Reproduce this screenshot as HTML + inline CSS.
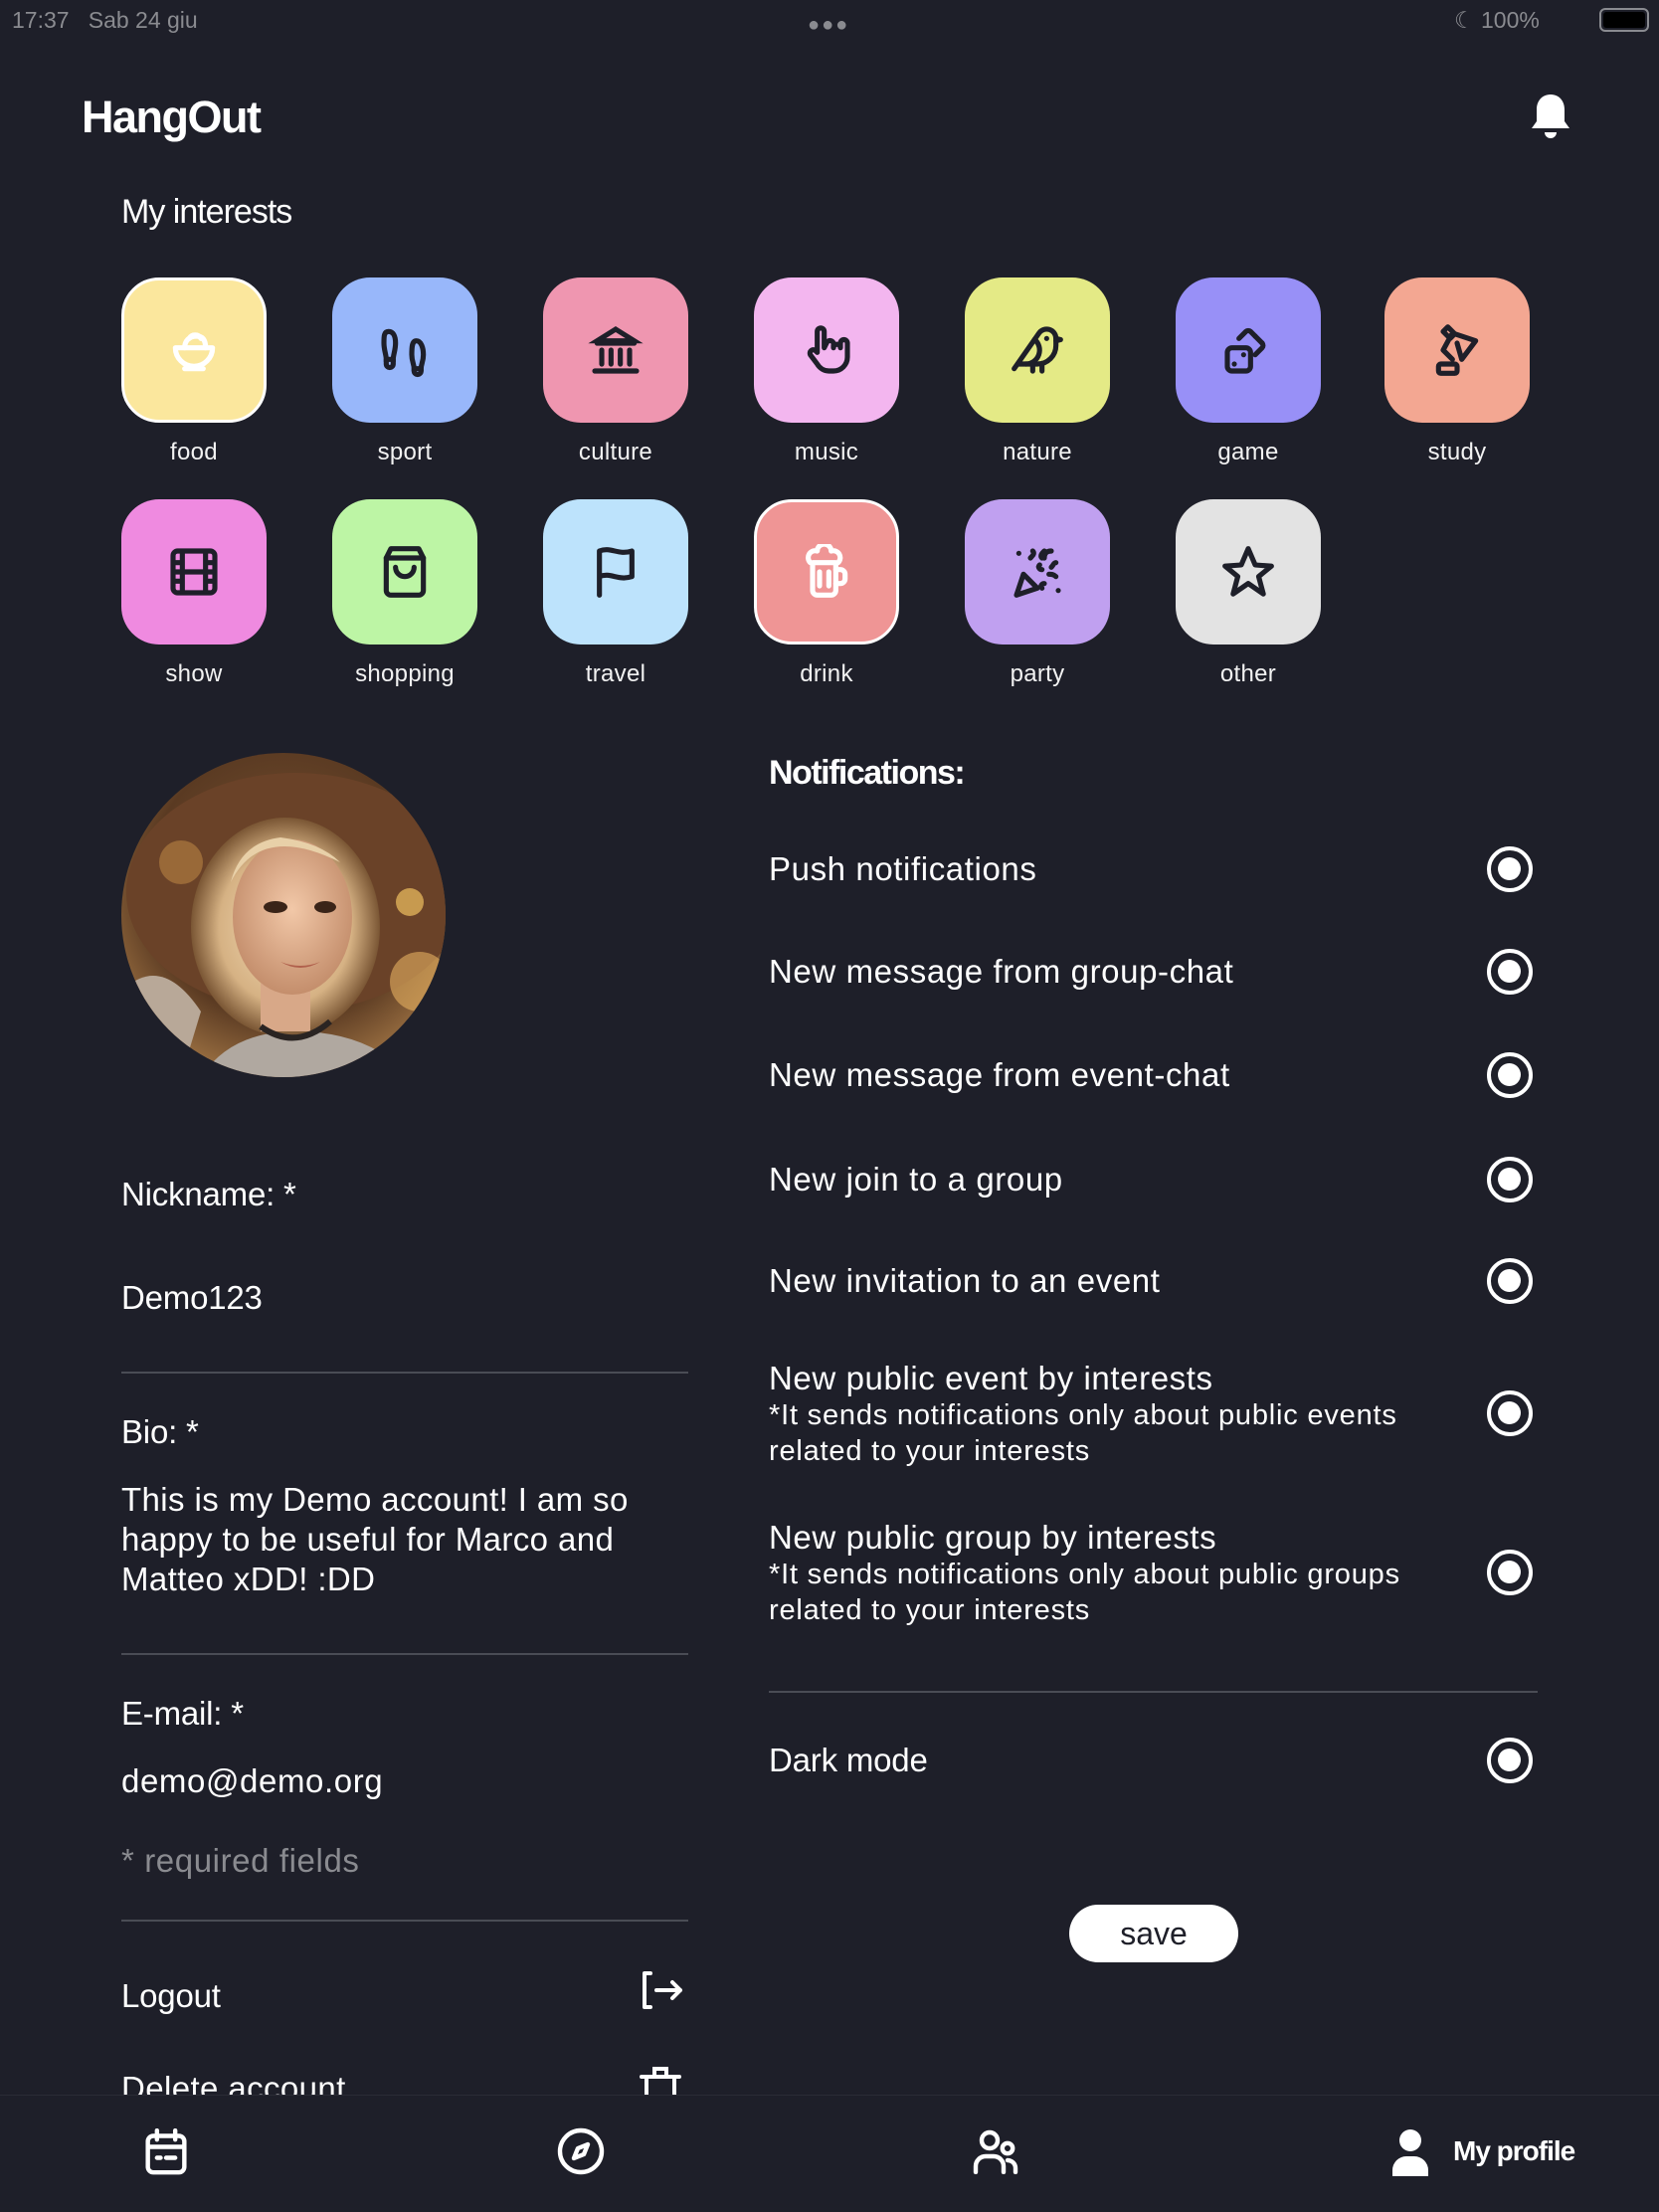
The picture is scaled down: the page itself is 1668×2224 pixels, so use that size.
<!DOCTYPE html>
<html><head><meta charset="utf-8">
<style>
*{margin:0;padding:0;box-sizing:border-box}
body{width:1668px;height:2224px;background:#1e1f29;overflow:hidden;position:relative;font-family:"Liberation Sans",sans-serif;color:#fff}
.a{position:absolute;white-space:nowrap}
.t{position:absolute;width:146px;height:146px;border-radius:38px}
.t svg{position:absolute;left:45px;top:45px;width:56px;height:56px}
.lb{position:absolute;width:146px;text-align:center;font-size:24px;line-height:30px;color:#f2f2f2;letter-spacing:0.3px}
.r{position:absolute;left:1495px;width:46px;height:46px;border:4.5px solid #fff;border-radius:50%}
.r:after{content:"";position:absolute;left:7px;top:7px;width:23px;height:23px;border-radius:50%;background:#fff}
.n{font-size:33px;line-height:40px;letter-spacing:0.6px}
.h{font-size:33px;line-height:40px;letter-spacing:-0.2px}
.line{position:absolute;height:2px;background:#4a4c55}
</style></head><body>
<div class="a" style="left:12px;top:6px;font-size:23px;color:#8a8b90;line-height:28px">17:37&nbsp;&nbsp;&nbsp;Sab 24 giu</div>
<div class="a" style="left:812px;top:14px;font-size:20px;color:#8a8b90;letter-spacing:2px">●●●</div>
<div class="a" style="left:1462px;top:6px;font-size:23px;color:#8a8b90;line-height:28px">☾ 100%</div>
<div class="a" style="left:1608px;top:8px;width:50px;height:24px;border:2px solid #8a8b90;border-radius:6px;padding:2px"><div style="background:#000;width:100%;height:100%;border-radius:3px"></div></div>

<div class="a" style="left:82px;top:92px;font-size:45px;line-height:52px;font-weight:bold;letter-spacing:-1.5px">HangOut</div>
<svg class="a" style="left:1536px;top:92px" width="46" height="50" viewBox="0 0 46 50"><path d="M23 3c-9 0-14 7-14 15v12l-5 7h38l-5-7V18C37 10 32 3 23 3z" fill="#fff"/><path d="M17 41a6 6 0 0 0 12 0z" fill="#fff"/></svg>

<div class="a" style="left:122px;top:193px;font-size:34px;line-height:40px;letter-spacing:-1px">My interests</div>

<!-- row 1 -->
<div class="t" style="left:122px;top:279px;background:#fbe79d;border:3px solid #fff"><svg viewBox="0 0 24 24" fill="none" stroke="#fff" stroke-width="2.2" stroke-linecap="round" stroke-linejoin="round" style="left:42px;top:42px"><path d="M4 11h16a8 8 0 0 1-16 0z"/><path d="M8 11c0-3 2-5 5-5s4 2 4 5"/><path d="M10 7c1-2 4-2 5 0"/><path d="M8 20h8"/></svg></div>
<div class="t" style="left:334px;top:279px;background:#98b7fa"><svg viewBox="0 0 24 24" fill="none" stroke="#1e1f29" stroke-width="2.2" stroke-linecap="round"><path d="M5 4c2 0 3 2 3 5s-1 5-1 7H4c0-2-1-4-1-7s0-5 2-5z"/><path d="M4 16v2a1.5 1.5 0 0 0 3 0v-2"/><path d="M17 8c-2 0-2 3-2 6s1 4 1 6h3c0-2 1-3 1-6s-1-6-3-6z"/><path d="M16 20v1a1.5 1.5 0 0 0 3 0v-1"/></svg></div>
<div class="t" style="left:546px;top:279px;background:#ef96b0"><svg viewBox="0 0 24 24" fill="none" stroke="#1e1f29" stroke-width="2.2" stroke-linecap="round"><path d="M3 21h18M4 9h16M12 3l8 5H4z"/><path d="M6 12v6M10 12v6M14 12v6M18 12v6"/></svg></div>
<div class="t" style="left:758px;top:279px;background:#f3b6ef"><svg viewBox="0 0 24 24" fill="none" stroke="#1e1f29" stroke-width="2.2" stroke-linecap="round" stroke-linejoin="round"><path d="M8 13V4a1.5 1.5 0 0 1 3 0v7l1-2a1.5 1.5 0 0 1 3 1v1a1.5 1.5 0 0 1 3 0v-2a1.5 1.5 0 0 1 3 0v6a6 6 0 0 1-6 6h-2a6 6 0 0 1-5-3l-3-4a1.5 1.5 0 0 1 2-2z"/></svg></div>
<div class="t" style="left:970px;top:279px;background:#e4ea86"><svg viewBox="0 0 24 24" fill="none" stroke="#1e1f29" stroke-width="2.2" stroke-linecap="round" stroke-linejoin="round"><path d="M16 7h.01M3.4 18H12a8 8 0 0 0 8-8V7a4 4 0 0 0-7.3-2.3L2 20"/><path d="M20 7l2 .5-2 .5M10 18v3M14 17.7V21M7 18a6 6 0 0 0 3.8-10.6"/></svg></div>
<div class="t" style="left:1182px;top:279px;background:#9890f7"><svg viewBox="0 0 24 24" fill="none" stroke="#1e1f29" stroke-width="2.2" stroke-linecap="round" stroke-linejoin="round"><rect x="3" y="11" width="10" height="10" rx="2"/><path d="M8 7l3-3a1.5 1.5 0 0 1 2 0l5 5a1.5 1.5 0 0 1 0 2l-3 3"/><path d="M6 18h.01M10 14h.01M15 6h.01M18 9h.01"/></svg></div>
<div class="t" style="left:1392px;top:279px;background:#f3a792"><svg viewBox="0 0 24 24" fill="none" stroke="#1e1f29" stroke-width="2.2" stroke-linecap="round" stroke-linejoin="round"><path d="M8 2l-2 2 3 3 2-2zM9.5 5.5L6 12l4 4M11 5l9 3-6 8-2-7"/><rect x="4" y="18" width="8" height="4" rx="1"/></svg></div>

<div class="lb" style="left:122px;top:440px">food</div>
<div class="lb" style="left:334px;top:440px">sport</div>
<div class="lb" style="left:546px;top:440px">culture</div>
<div class="lb" style="left:758px;top:440px">music</div>
<div class="lb" style="left:970px;top:440px">nature</div>
<div class="lb" style="left:1182px;top:440px">game</div>
<div class="lb" style="left:1392px;top:440px">study</div>

<!-- row 2 -->
<div class="t" style="left:122px;top:502px;background:#ef8ae0"><svg viewBox="0 0 24 24" fill="none" stroke="#1e1f29" stroke-width="2.2"><rect x="3" y="3" width="18" height="18" rx="2"/><path d="M7 3v18M17 3v18M3 8h4M3 12h18M3 16h4M17 8h4M17 16h4"/></svg></div>
<div class="t" style="left:334px;top:502px;background:#bdf5a5"><svg viewBox="0 0 24 24" fill="none" stroke="#1e1f29" stroke-width="2.2" stroke-linecap="round" stroke-linejoin="round"><path d="M6 2L4 6v14a2 2 0 0 0 2 2h12a2 2 0 0 0 2-2V6l-2-4z"/><path d="M4 6h16M16 10a4 4 0 0 1-8 0"/></svg></div>
<div class="t" style="left:546px;top:502px;background:#bde3fc"><svg viewBox="0 0 24 24" fill="none" stroke="#1e1f29" stroke-width="2.2" stroke-linecap="round" stroke-linejoin="round"><path d="M5 22V3M5 3c5-2 8 2 14 0v11c-6 2-9-2-14 0"/></svg></div>
<div class="t" style="left:758px;top:502px;background:#ef9595;border:3px solid #fff"><svg viewBox="0 0 24 24" fill="none" stroke="#fff" stroke-width="2.2" stroke-linecap="round" stroke-linejoin="round" style="left:42px;top:42px"><path d="M6 8h10v12a2 2 0 0 1-2 2H8a2 2 0 0 1-2-2z"/><path d="M16 11h2a2 2 0 0 1 2 2v2a2 2 0 0 1-2 2h-2M9 12v6M13 12v6"/><path d="M5 8a3 3 0 0 1 3-5 3 3 0 0 1 6 0 3 3 0 0 1 3 5"/></svg></div>
<div class="t" style="left:970px;top:502px;background:#c0a0f0"><svg viewBox="0 0 24 24" fill="none" stroke="#1e1f29" stroke-width="2.2" stroke-linecap="round" stroke-linejoin="round"><path d="M3 22l3-9 6 6z"/><path d="M4 4h.01M10 3c1 1 0 2-1 3M15 3c-1 1-2 2-1 3M18 3c-2 0-3 1-3 3M13 9c-1 1 0 2 1 2M20 8c-1 0-1 1-2 2M17 13c1 0 2 0 3 1M15 17c-1 0-2 1-1 2M21 20h.01"/></svg></div>
<div class="t" style="left:1182px;top:502px;background:#e3e3e3"><svg viewBox="0 0 24 24" fill="none" stroke="#1e1f29" stroke-width="2.2" stroke-linejoin="round"><path d="M12 2l3 7 7 .5-5.5 4.5 2 7.5L12 17l-6.5 4.5 2-7.5L2 9.5 9 9z"/></svg></div>

<div class="lb" style="left:122px;top:663px">show</div>
<div class="lb" style="left:334px;top:663px">shopping</div>
<div class="lb" style="left:546px;top:663px">travel</div>
<div class="lb" style="left:758px;top:663px">drink</div>
<div class="lb" style="left:970px;top:663px">party</div>
<div class="lb" style="left:1182px;top:663px">other</div>

<!-- avatar -->
<svg class="a" style="left:122px;top:757px" width="326" height="326" viewBox="0 0 326 326">
<defs>
<clipPath id="c"><circle cx="163" cy="163" r="163"/></clipPath>
<radialGradient id="bg" cx="0.5" cy="0.4" r="0.7"><stop offset="0" stop-color="#7a5434"/><stop offset="0.6" stop-color="#5a3a22"/><stop offset="1" stop-color="#b88850"/></radialGradient>
<radialGradient id="hair" cx="0.5" cy="0.5" r="0.5"><stop offset="0" stop-color="#f3dcb8"/><stop offset="0.7" stop-color="#d6b284"/><stop offset="1" stop-color="#7a5634"/></radialGradient>
<radialGradient id="face" cx="0.5" cy="0.45" r="0.55"><stop offset="0" stop-color="#f2c8a8"/><stop offset="1" stop-color="#c48e6c"/></radialGradient>
</defs>
<g clip-path="url(#c)">
<rect width="326" height="326" fill="url(#bg)"/>
<ellipse cx="175" cy="140" rx="170" ry="120" fill="#6a4228"/>
<circle cx="300" cy="230" r="30" fill="#e6b060" opacity="0.6"/>
<circle cx="60" cy="110" r="22" fill="#c89048" opacity="0.5"/>
<circle cx="290" cy="150" r="14" fill="#f0c060" opacity="0.7"/>
<path d="M0 240 Q40 200 80 260 L60 326 H0z" fill="#b8a898"/>
<path d="M80 326 Q110 280 175 280 Q250 280 290 326z" fill="#b0a8a0"/>
<ellipse cx="165" cy="175" rx="95" ry="110" fill="url(#hair)"/>
<rect x="140" y="220" width="50" height="60" fill="#d8a888"/>
<ellipse cx="172" cy="165" rx="60" ry="78" fill="url(#face)"/>
<path d="M110 130 Q140 70 220 110 Q200 90 160 85 Q120 90 110 130z" fill="#e8d0a8"/>
<ellipse cx="155" cy="155" rx="12" ry="6" fill="#3a2418"/>
<ellipse cx="205" cy="155" rx="11" ry="6" fill="#3a2418"/>
<path d="M160 210 Q180 218 200 210 Q180 222 160 210z" fill="#b0604c"/>
<path d="M140 275 Q175 300 210 270" stroke="#2a2422" stroke-width="6" fill="none"/>
</g></svg>

<!-- left form -->
<div class="a h" style="left:122px;top:1181px">Nickname: *</div>
<div class="a h" style="left:122px;top:1285px">Demo123</div>
<div class="line" style="left:122px;top:1379px;width:570px"></div>
<div class="a h" style="left:122px;top:1420px">Bio: *</div>
<div class="a n" style="left:122px;top:1488px;line-height:40px;white-space:normal;width:600px;letter-spacing:0.4px">This is my Demo account! I am so happy to be useful for Marco and Matteo xDD! :DD</div>
<div class="line" style="left:122px;top:1662px;width:570px"></div>
<div class="a h" style="left:122px;top:1703px">E-mail: *</div>
<div class="a n" style="left:122px;top:1771px">demo@demo.org</div>
<div class="a n" style="left:122px;top:1851px;color:#8a8b90">* required fields</div>
<div class="line" style="left:122px;top:1930px;width:570px"></div>
<div class="a h" style="left:122px;top:1987px">Logout</div>
<svg class="a" style="left:644px;top:1981px" width="44" height="40" viewBox="0 0 44 40" fill="none" stroke="#fff" stroke-width="4" stroke-linecap="round" stroke-linejoin="round"><path d="M10 3H4v34h6M16 20h24M32 12l8 8-8 8"/></svg>
<div class="a h" style="left:122px;top:2080px;letter-spacing:0.4px">Delete account</div>
<svg class="a" style="left:642px;top:2076px" width="44" height="40" viewBox="0 0 44 40" fill="none" stroke="#fff" stroke-width="4" stroke-linecap="round"><path d="M3 12h38M16 12V4h12v8M8 12v28M36 12v28"/></svg>

<!-- notifications -->
<div class="a" style="left:773px;top:757px;font-size:34px;line-height:40px;font-weight:bold;letter-spacing:-1.5px">Notifications:</div>
<div class="a n" style="left:773px;top:854px">Push notifications</div><div class="r" style="top:851px"></div>
<div class="a n" style="left:773px;top:957px">New message from group-chat</div><div class="r" style="top:954px"></div>
<div class="a n" style="left:773px;top:1061px">New message from event-chat</div><div class="r" style="top:1058px"></div>
<div class="a n" style="left:773px;top:1166px">New join to a group</div><div class="r" style="top:1163px"></div>
<div class="a n" style="left:773px;top:1268px">New invitation to an event</div><div class="r" style="top:1265px"></div>
<div class="a n" style="left:773px;top:1366px">New public event by interests</div>
<div class="a" style="left:773px;top:1405px;font-size:29px;line-height:36px;letter-spacing:0.8px">*It sends notifications only about public events<br>related to your interests</div>
<div class="r" style="top:1398px"></div>
<div class="a n" style="left:773px;top:1526px">New public group by interests</div>
<div class="a" style="left:773px;top:1565px;font-size:29px;line-height:36px;letter-spacing:0.8px">*It sends notifications only about public groups<br>related to your interests</div>
<div class="r" style="top:1558px"></div>
<div class="line" style="left:773px;top:1700px;width:773px"></div>
<div class="a h" style="left:773px;top:1750px">Dark mode</div><div class="r" style="top:1747px"></div>

<div class="a" style="left:1075px;top:1915px;width:170px;height:58px;background:#fff;border-radius:29px;color:#1e1f29;font-size:32px;line-height:58px;text-align:center">save</div>

<!-- bottom bar -->
<div class="a" style="left:0;top:2106px;width:1668px;height:118px;background:#1e1f29;border-top:1px solid #2a2b35"></div>
<svg class="a" style="left:145px;top:2140px" width="44" height="48" viewBox="0 0 24 26" fill="none" stroke="#fff" stroke-width="2.4" stroke-linecap="round"><rect x="2" y="4" width="20" height="20" rx="3"/><path d="M7 1v5M17 1v5M2 10h20M7 16h2M12 16h5"/></svg>
<svg class="a" style="left:560px;top:2139px" width="48" height="48" viewBox="0 0 24 24" fill="none" stroke="#fff" stroke-width="2.2" stroke-linejoin="round"><circle cx="12" cy="12" r="10.5"/><path d="M15.5 8.5l-2 5-5 2 2-5z"/></svg>
<svg class="a" style="left:977px;top:2140px" width="48" height="46" viewBox="0 0 24 23" fill="none" stroke="#fff" stroke-width="2.2" stroke-linecap="round"><circle cx="9" cy="6" r="4"/><path d="M2 22v-3a5 5 0 0 1 5-5h4a5 5 0 0 1 5 5v3"/><circle cx="18" cy="10" r="2.6"/><path d="M18 16a4 4 0 0 1 4 4v2"/></svg>
<svg class="a" style="left:1400px;top:2140px" width="36" height="48" viewBox="0 0 18 24" fill="#fff"><circle cx="9" cy="6" r="5.5"/><path d="M0 24v-3a7 7 0 0 1 7-7h4a7 7 0 0 1 7 7v3z"/></svg>
<div class="a" style="left:1461px;top:2146px;font-size:28px;line-height:34px;font-weight:bold;letter-spacing:-1px">My profile</div>
</body></html>
